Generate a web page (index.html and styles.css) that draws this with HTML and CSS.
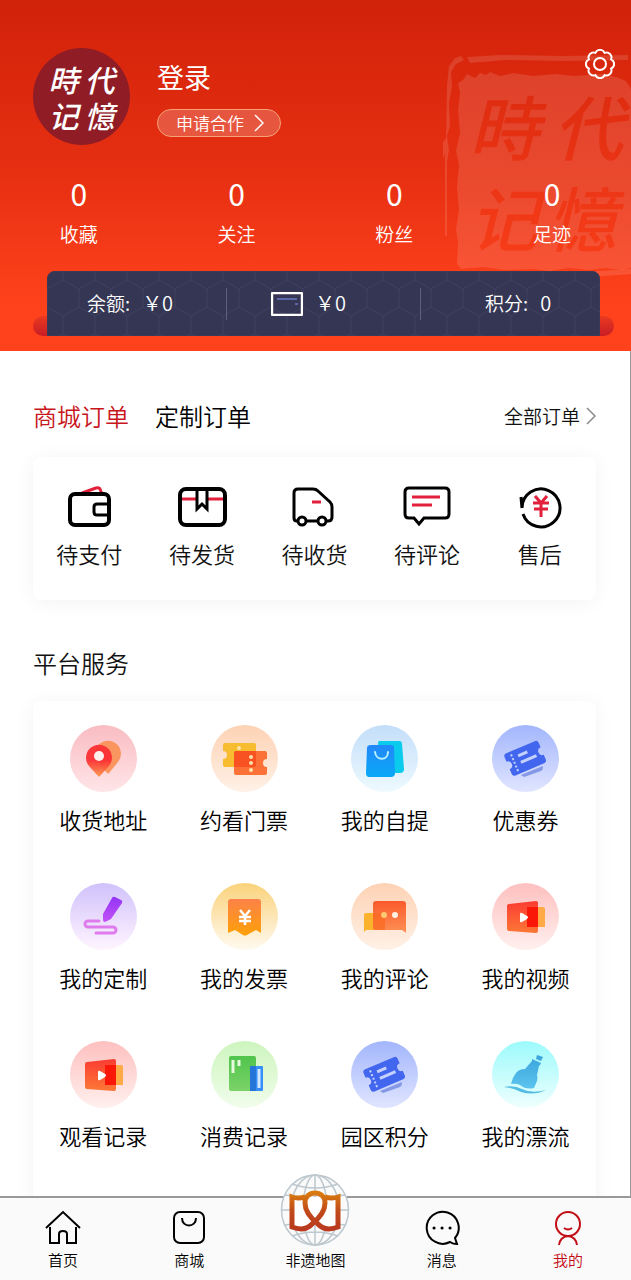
FILE: index.html
```
<!DOCTYPE html>
<html lang="zh-CN">
<head>
  <meta charset="UTF-8">
  <meta name="viewport" content="width=device-width, initial-scale=1.0">
  <title>我的</title>
  <link rel="stylesheet" href="styles.css">
</head>
<body>
  <div class="app">
    <main class="content">

      <!-- Red header -->
      <header class="header">
        <svg class="seal" viewBox="0 0 190 226" aria-hidden="true">
          <defs>
            <linearGradient id="sealInk" gradientUnits="userSpaceOnUse" x1="0" y1="0" x2="0" y2="226">
              <stop offset="0" stop-color="#d8280e"/>
              <stop offset="1" stop-color="#fa3f1a"/>
            </linearGradient>
          </defs>
          <g fill="#fff" fill-opacity=".12">
            <path d="M17 31l5-3 4-6 8 4 5-5 6 2 4-3 10 4 13-3 20 3 23-2 18 2 28-2 14 3 10 4 5 8v179l-9 2-17-2-15 2-22-2-18 3-17-2-28 1-22-3-22 2-4-5 1-21-2-14 3-19-2-22 2-23-3-14 4-18-2-23 2-17z"/>
            <path d="M4 184V102l-2 4V90l3-4 1-52 2-20 6-8 6-2 3 4-8 4-5 8 1 14-3 18 1 22-3 10 2 14-2 12v74z"/>
            <path d="M26 5l34-2 60 1 67-1v5l-64 1-58-1-36 3z"/>
            <path d="M104 219l38 1 48-3v5l-40 3-46-2z"/>
          </g>
          <g class="seal-text" fill="url(#sealInk)">
            <text x="28" y="103">時</text>
            <text x="112" y="103">代</text>
            <text x="28" y="194">记</text>
            <text x="106" y="194">憶</text>
          </g>
        </svg>

        <button class="settings" type="button" aria-label="设置">
          <svg viewBox="-15 -15 30 30" width="30" height="30">
            <path d="M11.1 4.6A5 5 0 0 1 4.6 11.1 5 5 0 0 1-4.6 11.1 5 5 0 0 1-11.1 4.6 5 5 0 0 1-11.1-4.6 5 5 0 0 1-4.6-11.1 5 5 0 0 1 4.6-11.1 5 5 0 0 1 11.1-4.6 5 5 0 0 1 11.1 4.6z"/>
            <circle r="6"/>
          </svg>
        </button>

        <div class="profile">
          <div class="avatar"><span>時</span><span>代</span><span>记</span><span>憶</span></div>
          <div class="profile-info">
            <a class="login" href="#">登录</a>
            <button class="apply" type="button">申请合作
              <svg viewBox="0 0 10 18" width="10" height="18"><path d="M1 1l8 8-8 8"/></svg>
            </button>
          </div>
        </div>

        <div class="stats">
          <a href="#"><b>0</b><span>收藏</span></a>
          <a href="#"><b>0</b><span>关注</span></a>
          <a href="#"><b>0</b><span>粉丝</span></a>
          <a href="#"><b>0</b><span>足迹</span></a>
        </div>

        <div class="wallet">
          <div class="wallet-bar">
            <svg class="wallet-pattern" width="100%" height="100%" aria-hidden="true">
              <defs>
                <pattern id="hex" width="32" height="54" patternUnits="userSpaceOnUse">
                  <path d="M16 0v9L0 18v18l16 9v9M16 9l16 9v18l-16 9"/>
                </pattern>
              </defs>
              <rect width="100%" height="100%" fill="url(#hex)"/>
            </svg>
            <div class="wallet-item balance"><span>余额:</span><span class="num">￥0</span></div>
            <div class="wallet-item card-money">
              <svg viewBox="0 0 32 24" width="32" height="24">
                <rect x="1" y="1" width="30" height="22" rx="1" fill="none" stroke="#fff" stroke-width="2.4"/>
                <path d="M6 7h20M24 12h3" stroke="#5b68a8" stroke-width="2"/>
              </svg>
              <span class="num">￥0</span>
            </div>
            <div class="wallet-item points"><span>积分:</span><span class="num">0</span></div>
          </div>
        </div>
      </header>

      <!-- Orders -->
      <section class="orders">
        <div class="order-tabs">
          <button class="tab active" type="button">商城订单</button>
          <button class="tab" type="button">定制订单</button>
          <a class="all-orders" href="#">全部订单
            <svg viewBox="0 0 10 18" width="10" height="18"><path d="M1 1l8 8-8 8"/></svg>
          </a>
        </div>
        <div class="card order-grid">
          <a href="#">
            <svg viewBox="0 0 50 44">
              <path class="red" d="M18 8l14-5q3-1 4 1l2 5"/>
              <rect x="6" y="9" width="39" height="31" rx="5"/>
              <path class="flag" d="M45 19H33q-3 0-3 3v5q0 3 3 3h12"/>
            </svg>
            <span>待支付</span>
          </a>
          <a href="#">
            <svg viewBox="0 0 50 44">
              <path class="red" d="M3 14h17M31 14h17"/>
              <rect x="3" y="4" width="45" height="36" rx="6"/>
              <path class="flag" d="M20 4v20l5-5 5 5V4"/>
            </svg>
            <span>待发货</span>
          </a>
          <a href="#">
            <svg class="thin" viewBox="0 0 50 44">
              <path d="M9 36H8q-3 0-3-3V8q0-4 4-4h15q3 0 5 2l12 11q2 2 2 5v10q0 4-4 4h-2M17 36h12"/>
              <circle cx="13" cy="36" r="4"/><circle cx="33" cy="36" r="4"/>
              <path class="red" d="M23 17h9"/>
            </svg>
            <span>待收货</span>
          </a>
          <a href="#">
            <svg class="thin" viewBox="0 0 50 44">
              <path d="M7 3h36q4 0 4 4v22q0 4-4 4H22l-5 6-5-6H7q-4 0-4-4V7q0-4 4-4z"/>
              <path class="red" d="M10 12h28M10 20h20"/>
            </svg>
            <span>待评论</span>
          </a>
          <a href="#">
            <svg class="thin" viewBox="0 0 50 44">
              <path d="M8 29A19 19 0 1 0 7 23M6 12l1 11"/>
              <path class="red" d="M20 11l6 7 6-7M18 18h16M19 24h14M26 18v14"/>
            </svg>
            <span>售后</span>
          </a>
        </div>
      </section>

      <!-- Platform services -->
      <section class="services">
        <h2>平台服务</h2>
        <div class="card service-grid">
          <a href="#">
            <svg viewBox="0 0 67 67">
              <defs>
                <linearGradient id="bgPink" x2="0" y2="1"><stop stop-color="#f9bcc2"/><stop offset="1" stop-color="#ffe5e7"/></linearGradient>
                <linearGradient id="pin" x2="0" y2="1"><stop offset=".5" stop-color="#fb3034"/><stop offset="1" stop-color="#fd954c"/></linearGradient>
              </defs>
              <circle cx="33.500" cy="33.500" r="33.500" fill="url(#bgPink)"/>
              <path d="M37 48L28 37A13 13 0 1 1 48 37L39 48q-1 1-2 0z" fill="#fb9560"/>
              <path d="M28 51L19 41A13 13 0 1 1 39 41L30 51q-1 1-2 0z" fill="url(#pin)" fill-opacity=".95"/>
              <circle cx="29" cy="31" r="5" fill="#fff0ee"/>
            </svg>
            <span>收货地址</span>
          </a>
          <a href="#">
            <svg viewBox="0 0 67 67">
              <defs>
                <linearGradient id="bgOrange" x2="0" y2="1"><stop stop-color="#fdd2b4"/><stop offset="1" stop-color="#fff1e7"/></linearGradient>
              </defs>
              <circle cx="33.500" cy="33.500" r="33.500" fill="url(#bgOrange)"/>
              <path d="M14 18h29q2 0 2 2v20q0 2-2 2H14q-2 0-2-2v-6a4 4 0 0 0 0-8v-6q0-2 2-2z" fill="#f8bc30"/>
              <path d="M25 26h29q2 0 2 2v6a4 4 0 0 0 0 8v6q0 2-2 2H25q-2 0-2-2V28q0-2 2-2z" fill="#fc7138"/>
              <path d="M23 28q0-2 2-2h20v14q0 2-2 2H23z" fill="#f85222"/>
              <g fill="#ffe3a8"><circle cx="28" cy="23" r="2"/><circle cx="40" cy="32" r="2"/><circle cx="40" cy="38" r="2"/><circle cx="40" cy="45" r="2"/></g>
            </svg>
            <span>约看门票</span>
          </a>
          <a href="#">
            <svg viewBox="0 0 67 67">
              <defs>
                <linearGradient id="bgSky" x2="0" y2="1"><stop stop-color="#c3def9"/><stop offset="1" stop-color="#eefaff"/></linearGradient>
                <linearGradient id="bag" x2="0" y2="1"><stop stop-color="#2387fa"/><stop offset="1" stop-color="#08a9f7"/></linearGradient>
              </defs>
              <circle cx="33.500" cy="33.500" r="33.500" fill="url(#bgSky)"/>
              <path d="M28 16h20q3 0 3 3l2 25q0 4-4 4H27V19q0-3 1-3z" fill="#0bcbed"/>
              <path d="M20 20h20q3 0 3 3l1 25q0 4-4 4H18q-3 0-3-4l1-25q0-3 4-3z" fill="url(#bag)"/>
              <path d="M24 27c1 9 13 9 13 0" fill="none" stroke="#b9f0ff" stroke-width="2" stroke-linecap="round"/>
            </svg>
            <span>我的自提</span>
          </a>
          <a href="#">
            <svg viewBox="0 0 67 67">
              <defs>
                <linearGradient id="bgBlue" x2="0" y2="1"><stop stop-color="#a3b6fc"/><stop offset="1" stop-color="#e0e5ff"/></linearGradient>
                <symbol id="coupon" viewBox="0 0 67 67">
                  <circle cx="33.500" cy="33.500" r="33.500" fill="url(#bgBlue)"/>
                  <path d="M29 50l22-9q0 4-2 5l-17 6z" fill="#8598e6"/>
                  <g transform="rotate(-23 34 34)">
                    <path d="M18 21h31q3 0 3 3v5a4 4 0 0 0 0 8v5q0 3-3 3H18q-3 0-3-3v-5a4 4 0 0 0 0-8v-5q0-3 3-3z" fill="#4267ee"/>
                    <path d="M28 28h10M28 35h17" stroke="#c5d1ff" stroke-width="3"/>
                    <path d="M22 24v18" stroke="#c5d1ff" stroke-width="2" stroke-dasharray="2 2"/>
                  </g>
                </symbol>
              </defs>
              <use href="#coupon"/>
            </svg>
            <span>优惠券</span>
          </a>

          <a href="#">
            <svg viewBox="0 0 67 67">
              <defs>
                <linearGradient id="bgPurple" x2="0" y2="1"><stop stop-color="#d0c1fb"/><stop offset="1" stop-color="#fff5ff"/></linearGradient>
                <linearGradient id="pen" x2="0" y2="1"><stop stop-color="#9233f5"/><stop offset="1" stop-color="#c353f7"/></linearGradient>
              </defs>
              <circle cx="33.500" cy="33.500" r="33.500" fill="url(#bgPurple)"/>
              <path d="M45 14l6 3q2 1 1 3L41 36l-6 3q-2 0-2-2v-6l9-16q1-2 3-1z" fill="url(#pen)"/>
              <path d="M29 38H18a3 3 0 0 0 0 6h25a3 3 0 0 1 0 6H26" fill="none" stroke="#e07bee" stroke-width="3" stroke-linecap="round"/>
            </svg>
            <span>我的定制</span>
          </a>
          <a href="#">
            <svg viewBox="0 0 67 67">
              <defs>
                <linearGradient id="bgYellow" x2="0" y2="1"><stop stop-color="#fad27b"/><stop offset="1" stop-color="#fffaf0"/></linearGradient>
                <linearGradient id="bill" x2="0" y2="1"><stop stop-color="#fc8248"/><stop offset="1" stop-color="#fea008"/></linearGradient>
              </defs>
              <circle cx="33.500" cy="33.500" r="33.500" fill="url(#bgYellow)"/>
              <path d="M20 16h27q3 0 3 3v31l-5-3-9 5q-2 1-4 0l-8-5-7 3V19q0-3 3-3z" fill="url(#bill)"/>
              <path d="M29 27l5 6 5-6M28 34h12M28 38h12M34 33v9" fill="none" stroke="#fff" stroke-width="2.500"/>
            </svg>
            <span>我的发票</span>
          </a>
          <a href="#">
            <svg viewBox="0 0 67 67">
              <defs>
                <linearGradient id="talk" x2="0" y2="1"><stop stop-color="#fa5a2b"/><stop offset="1" stop-color="#fe9156"/></linearGradient>
              </defs>
              <circle cx="33.500" cy="33.500" r="33.500" fill="url(#bgOrange)"/>
              <path d="M15 30h19v17H15l-2 2V32q0-2 2-2z" fill="#fcb22d"/>
              <path d="M25 18h27q3 0 3 3v29l-4-3H25q-3 0-3-3V21q0-3 3-3z" fill="url(#talk)"/>
              <path d="M22 30h12v17h-9q-3 0-3-3z" fill="#f96a1f" fill-opacity=".7"/>
              <circle cx="33" cy="32" r="3" fill="#ffc873"/><circle cx="44" cy="32" r="3" fill="#fff0e4"/>
            </svg>
            <span>我的评论</span>
          </a>
          <a href="#">
            <svg viewBox="0 0 67 67">
              <defs>
                <linearGradient id="bgRed" x2="0" y2="1"><stop stop-color="#fdc0bf"/><stop offset="1" stop-color="#fff0ee"/></linearGradient>
                <linearGradient id="film" x2="0" y2="1"><stop stop-color="#fa3c32"/><stop offset="1" stop-color="#fd7836"/></linearGradient>
                <symbol id="video" viewBox="0 0 67 67">
                  <circle cx="33.500" cy="33.500" r="33.500" fill="url(#bgRed)"/>
                  <path d="M35 24h16q2 0 2 2v18H35z" fill="#feaa46"/>
                  <path d="M17 21l27-3q2 0 2 2v28q0 2-2 2l-27-2q-2 0-2-2V23q0-2 2-2z" fill="url(#film)"/>
                  <path d="M35 24h11v20H35z" fill="#fb1708"/>
                  <path d="M28 31q0-2 2-1l5 3q2 1 0 3l-5 3q-2 1-2-1z" fill="#fff"/>
                </symbol>
              </defs>
              <use href="#video"/>
            </svg>
            <span>我的视频</span>
          </a>

          <a href="#">
            <svg viewBox="0 0 67 67"><use href="#video"/></svg>
            <span>观看记录</span>
          </a>
          <a href="#">
            <svg viewBox="0 0 67 67">
              <defs>
                <linearGradient id="bgGreen" x2="0" y2="1"><stop stop-color="#cdf5bd"/><stop offset="1" stop-color="#f1fdec"/></linearGradient>
                <linearGradient id="book" x2="0" y2="1"><stop stop-color="#50c44c"/><stop offset="1" stop-color="#7bd368"/></linearGradient>
              </defs>
              <circle cx="33.500" cy="33.500" r="33.500" fill="url(#bgGreen)"/>
              <rect x="18" y="15" width="27" height="35" rx="2" fill="url(#book)"/>
              <path d="M22 19v13M28 19v6" stroke="#e5fadd" stroke-width="3"/>
              <rect x="39" y="25" width="13" height="25" rx="1" fill="#3590fa"/>
              <path d="M39 25h6v25h-6z" fill="#2575d8"/>
              <path d="M48 28v19" stroke="#d3e8ff" stroke-width="3"/>
            </svg>
            <span>消费记录</span>
          </a>
          <a href="#">
            <svg viewBox="0 0 67 67"><use href="#coupon"/></svg>
            <span>园区积分</span>
          </a>
          <a href="#">
            <svg viewBox="0 0 67 67">
              <defs>
                <linearGradient id="bgCyan" x2="0" y2="1"><stop stop-color="#9cfafc"/><stop offset="1" stop-color="#effffe"/></linearGradient>
                <linearGradient id="bottle" x2="0" y2="1"><stop stop-color="#3aa3dc"/><stop offset="1" stop-color="#5cc4ee"/></linearGradient>
              </defs>
              <circle cx="33.500" cy="33.500" r="33.500" fill="url(#bgCyan)"/>
              <path d="M45 14l3 1 3 1-2 4-5-2zM40 18l9 4-1 2-1 1-2 9q1 3 0 6l-3 7q-8 2-14-3-4-2-9-1 1-6 5-11 3-4 9-4l7-8z" fill="url(#bottle)"/>
              <path d="M12 46q10-2 18 2 10 5 24 1-12 6-25 2-8-4-17-5z" fill="#54bce2"/>
            </svg>
            <span>我的漂流</span>
          </a>
        </div>
      </section>
    </main>

    <!-- Bottom tab bar -->
    <nav class="tabbar">
      <a href="#">
        <svg viewBox="0 0 36 36" width="36" height="36"><path d="M5 17v16h9V24q0-3 4-3t4 3v9h9V17M1 18L18 2l17 16"/></svg>
        <span>首页</span>
      </a>
      <a href="#">
        <svg viewBox="0 0 36 36" width="36" height="36"><rect x="3" y="2" width="30" height="31" rx="6"/><path d="M11 8c0 10 14 10 14 0"/></svg>
        <span>商城</span>
      </a>
      <a class="map" href="#">
        <svg viewBox="0 0 70 72" width="70" height="72">
          <defs>
            <linearGradient id="ribbon" x2="0" y2="1"><stop stop-color="#d97b10"/><stop offset=".5" stop-color="#c14a1a"/><stop offset="1" stop-color="#b93a20"/></linearGradient>
          </defs>
          <ellipse cx="35" cy="36" rx="34" ry="35" fill="#fafafa"/>
          <g fill="none" stroke="#bcc7ce" stroke-width="1.500">
            <ellipse cx="35" cy="36" rx="33.500" ry="35"/>
            <ellipse cx="35" cy="36" rx="24" ry="35"/>
            <ellipse cx="35" cy="36" rx="12" ry="35"/>
            <path d="M35 1v70M1 36h68M12 10q23 8 46 0M12 62q23-8 46 0M5 21q30 5 60 0M5 51q30-5 60 0"/>
          </g>
          <path d="M12 23h46v29q-10 6-23-2-13 8-23 2z" fill="#fff"/>
          <path d="M25 23q-7 2-13 0v30q13 5 20-3C42 42 45 36 45 29 45 22 40 19 35 19S25 22 25 29C25 36 28 42 38 50q7 8 20 3V23q-6 2-13 0" fill="none" stroke="url(#ribbon)" stroke-width="5"/>
        </svg>
        <span>非遗地图</span>
      </a>
      <a href="#">
        <svg viewBox="0 0 36 36" width="36" height="36"><path d="M31 28l2 6q-4 0-7-2A16 16 0 1 1 31 28z"/><path class="dots" d="M10 18h.1M18 18h.1M26 18h.1"/></svg>
        <span>消息</span>
      </a>
      <a class="current" href="#">
        <svg viewBox="0 0 36 36" width="36" height="36"><circle cx="18" cy="14" r="12"/><path d="M14 18q4 3 8 0M9 35q1-8 9-9 8 1 9 9"/></svg>
        <span>我的</span>
      </a>
    </nav>
  </div>
</body>
</html>
```

FILE: styles.css
```
* {
  box-sizing: border-box;
}

body {
  margin: 0;
  background: #fff;
  color: #111;
  font-family: "Noto Sans CJK SC", "Noto Sans", sans-serif;
  font-weight: 350;
}

a {
  color: inherit;
  text-decoration: none;
}

button {
  padding: 0;
  border: none;
  background: none;
  color: inherit;
  font: inherit;
  cursor: pointer;
}

.app {
  display: flex;
  flex-direction: column;
  height: 100vh;
}

.content {
  flex: 1;
  min-height: 0;
  overflow-y: auto;
  scrollbar-width: none;
  box-shadow: inset -1px 0 #999;
}

/* Header */
.header {
  position: relative;
  padding-top: 48px;
  padding-bottom: 15px;
  background: linear-gradient(#d1220a, #e73012 50%, #ff421c 88%);
  color: #fff;
  overflow: hidden;
}

.seal {
  position: absolute;
  top: 52px;
  right: 0;
  width: 190px;
  height: 226px;
}

.seal-text {
  font-size: 70px;
  font-style: italic;
  font-weight: 500;
}

.settings {
  position: absolute;
  top: 49px;
  right: 16px;
  z-index: 1;
  height: 30px;
}

.settings svg {
  display: block;
  fill: none;
  stroke: #fff;
  stroke-width: 2;
}

.profile {
  position: relative;
  display: flex;
  gap: 27px;
  padding-left: 33px;
}

.avatar {
  display: grid;
  grid-template-columns: auto auto;
  column-gap: 6px;
  place-content: center;
  width: 97px;
  height: 97px;
  border-radius: 50%;
  background: #901d26;
  font-size: 30px;
  font-style: italic;
  font-weight: 500;
  line-height: 36px;
}

.profile-info {
  display: flex;
  flex-direction: column;
  align-items: flex-start;
  gap: 14px;
  padding-top: 11px;
}

.login {
  font-size: 27px;
  font-weight: 400;
  line-height: 36px;
}

.apply {
  display: flex;
  align-items: center;
  gap: 10px;
  height: 28px;
  padding: 0 16px 0 18px;
  border: 1px solid #f5a277;
  border-radius: 14px;
  background: rgba(255, 255, 255, .2);
  font-size: 17px;
  line-height: 24px;
}

.apply svg,
.all-orders svg {
  fill: none;
  stroke: currentColor;
  stroke-width: 1.5;
}

.stats {
  position: relative;
  display: grid;
  grid-template-columns: repeat(4, 1fr);
  margin-top: 28px;
}

.stats a {
  display: flex;
  flex-direction: column;
  align-items: center;
}

.stats b {
  font-size: 30px;
  font-weight: 400;
  line-height: 40px;
}

.stats span {
  font-size: 19px;
  line-height: 42px;
}

.wallet {
  position: relative;
  margin: 16px 17px 0 33px;
  padding: 0 14px;
}

/* red roller the bar hangs on */
.wallet::before {
  content: '';
  position: absolute;
  left: 0;
  right: 0;
  bottom: 0;
  height: 20px;
  border-radius: 10px;
  background: linear-gradient(#ea3a20, #c81d25);
}

.wallet-bar {
  position: relative;
  display: grid;
  grid-template-columns: 180fr 194fr 179fr;
  align-items: center;
  height: 65px;
  border-radius: 8px 8px 0 0;
  background: #343653;
  overflow: hidden;
}

.wallet-pattern {
  position: absolute;
  inset: 0;
  fill: none;
  stroke: #3d405f;
}

.wallet-item {
  position: relative;
  display: flex;
  align-items: center;
  gap: 12px;
  height: 32px;
  padding-left: 40px;
  border-right: 1px solid #5e6079;
  font-size: 19px;
  line-height: 28px;
}

.wallet-item span {
  margin-bottom: 2px;
}

.wallet-item .num {
  font-size: 20px;
}

.card-money {
  padding-left: 44px;
}

.points {
  padding-left: 64px;
  border-right: none;
}

/* Orders */
.orders,
.services {
  padding: 0 35px 0 33px;
}

.order-tabs {
  display: flex;
  align-items: center;
  gap: 26px;
  padding-top: 47px;
  line-height: 36px;
}

.tab {
  color: #000;
  font-size: 24px;
}

.tab.active {
  color: #c8161d;
}

.all-orders {
  display: flex;
  align-items: center;
  gap: 6px;
  margin-left: auto;
  font-size: 19px;
}

.all-orders svg {
  color: #888;
}

.card {
  display: grid;
  border-radius: 8px;
  background: #fff;
  box-shadow: 0 2px 20px rgba(0, 0, 0, .05);
}

.card a {
  display: flex;
  flex-direction: column;
  align-items: center;
  font-size: 22px;
}

.order-grid {
  grid-template-columns: repeat(5, 1fr);
  height: 143px;
  margin-top: 23px;
  padding-top: 28px;
}

.order-grid svg {
  width: 50px;
  height: 44px;
  fill: none;
  stroke: #000;
  stroke-width: 4;
}

.order-grid .thin,
.order-grid .flag {
  stroke-width: 3;
}

.order-grid .red {
  stroke: #e2203b;
  stroke-width: 3;
}

.order-grid span {
  margin-top: 8px;
  line-height: 32px;
}

/* Services */
.services h2 {
  margin: 45px 0 20px;
  font-size: 24px;
  font-weight: 350;
  line-height: 36px;
}

.service-grid {
  grid-template-columns: repeat(4, 1fr);
  row-gap: 48px;
  padding: 24px 0 80px;
  color: #000;
}

.service-grid svg {
  width: 67px;
  height: 67px;
}

.service-grid span {
  margin-top: 11px;
  line-height: 32px;
}

/* Bottom tab bar */
.tabbar {
  display: grid;
  grid-template-columns: repeat(5, 1fr);
  grid-template-rows: 100%;
  position: relative;
  height: 84px;
  border-top: 2px solid #999;
  background: #fafafa;
  color: #000;
  font-size: 15px;
}

.tabbar a {
  display: flex;
  flex-direction: column;
  align-items: center;
  justify-content: flex-end;
  gap: 2px;
  padding-bottom: 8px;
  line-height: 24px;
}

.tabbar svg {
  flex: none;
  fill: none;
  stroke: currentColor;
  stroke-width: 2;
}

.tabbar .dots {
  stroke-width: 3;
  stroke-linecap: round;
}

.tabbar .map svg {
  stroke: none;
}

.tabbar .current {
  color: #c30d16;
}
```
